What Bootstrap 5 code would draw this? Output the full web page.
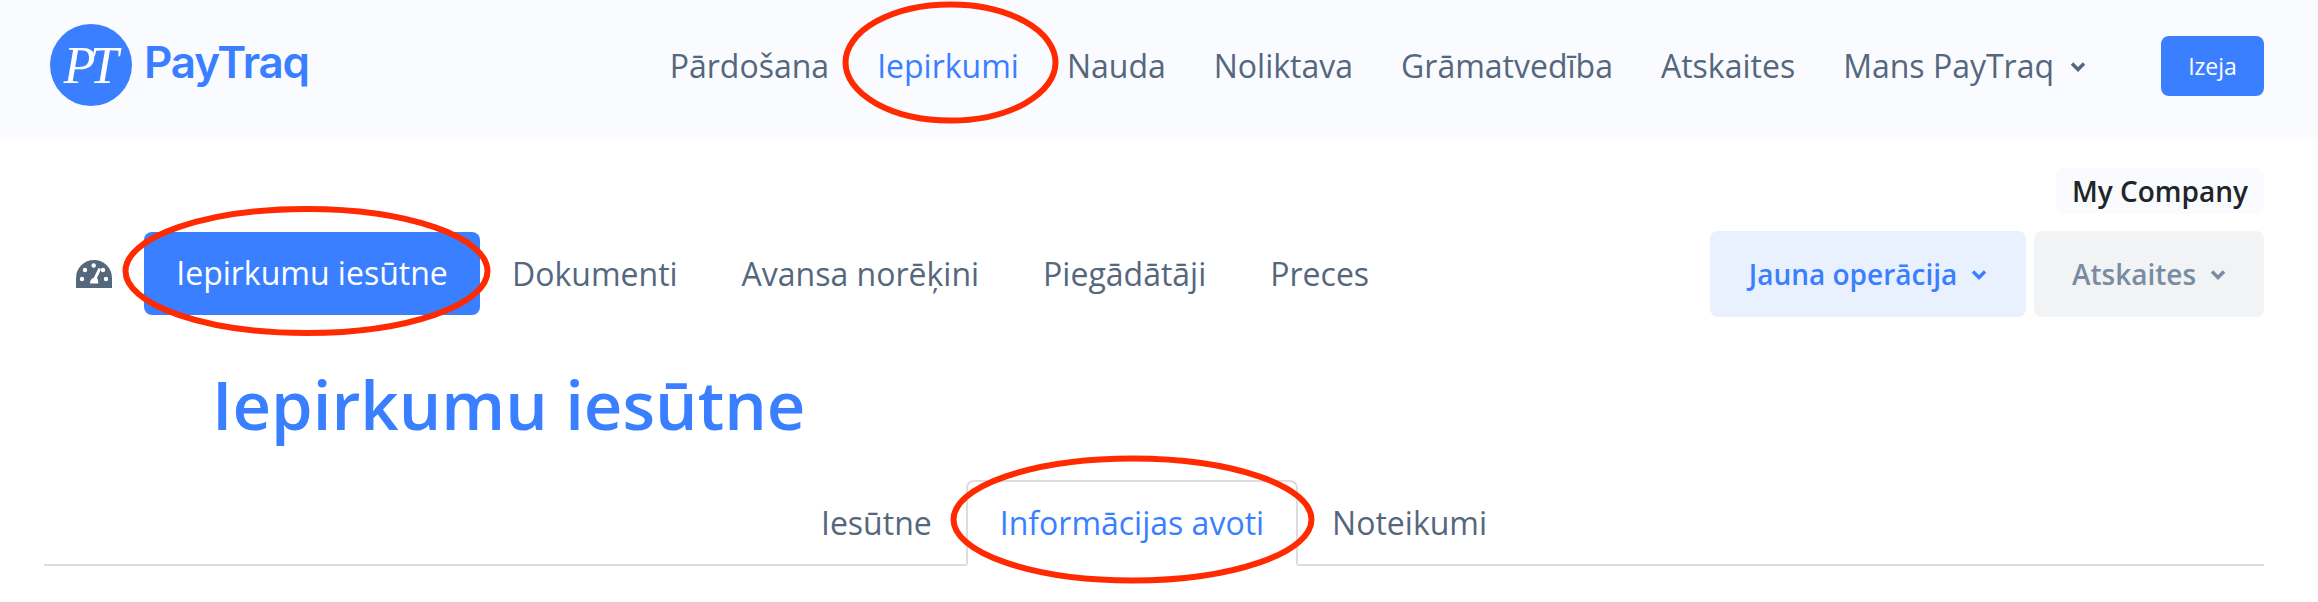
<!DOCTYPE html>
<html lang="lv">
<head>
<meta charset="utf-8">
<title>PayTraq</title>
<link href="https://cdn.jsdelivr.net/npm/bootstrap@5.3.0/dist/css/bootstrap.min.css" rel="stylesheet">
<style>
body{font-family:"Open Sans","Noto Sans",sans-serif;background:#fff;color:#55677d;position:relative;height:602px;overflow:hidden}
.pt-header{background:#f9fbff;height:139px;padding:0 54px 0 50px}
.pt-logo{gap:12px;color:#3a7fff;text-decoration:none;margin-top:-9px}
.pt-disc{width:82px;height:82px;border-radius:50%;background:#3a7fff;color:#fff;font:italic 400 52px "Liberation Serif",serif;letter-spacing:-6px;padding-right:6px}
.pt-word{font:600 44px/1 Inter,sans-serif;letter-spacing:-1.2px;margin-top:-7px}
.pt-top{gap:48px;font-size:32px;margin-top:-7px}
.pt-top a{color:#55677d;text-decoration:none}
.pt-top a.pt-on{color:#3a7fff}
.pt-chev{width:16px;height:11px;flex:none}
.pt-exit{background:#3a7fff;border:0;color:#fff;width:103px;height:60px;border-radius:8px;font-size:23px;margin-left:75px;padding:0;margin-top:-7px}
.pt-body{padding:0 54px 0 44px}
.pt-company{margin-top:29px;height:46px;width:208px;background:#f9fbff;color:#212529;font-weight:600;font-size:28px;border-radius:8px}
.pt-sub{margin-top:17px;height:86px}
.pt-gauge{width:36px;height:28px;margin-left:32px;margin-right:32px;flex:none}
.pt-pill{background:#3a7fff;color:#fff;height:83px;width:336px;border-radius:8px;font-size:32px;margin-right:32px;margin-bottom:2px;text-decoration:none}
.pt-subitems{gap:64px;font-size:32px}
.pt-subitems a{color:#55677d;text-decoration:none}
.pt-act{height:86px;border-radius:8px;font-size:28px;font-weight:600;border:0;gap:14px;padding:0}
.pt-act-a{background:#e9f1fe;color:#3a7fff;width:316px}
.pt-act-b{background:#f1f3f5;color:#7a8ca3;width:230px;margin-left:8px}
.pt-title{color:#3a7fff;font-size:67px;font-weight:600;line-height:90px;margin:0 0 0 168px;padding-top:42px}
.pt-tabs{height:86px;margin-top:31px;border-bottom:2px solid #dcdddf}
.pt-tab{font-size:32px;color:#55677d;height:86px;padding:0 32px;margin-bottom:-2px;border:2px solid transparent;border-radius:8px 8px 0 0;text-decoration:none}
.pt-tab.pt-live{color:#3a7fff;border-color:#dcdddf #dcdddf #fff;background:#fff}
.pt-mark{position:absolute;pointer-events:none;overflow:visible}
.pt-mark ellipse{fill:none;stroke:#ff2a00;stroke-width:6}
</style>
</head>
<body>
<header class="pt-header d-flex align-items-center">
  <a href="#" class="pt-logo d-flex align-items-center">
    <span class="pt-disc d-flex align-items-center justify-content-center">PT</span>
    <span class="pt-word">PayTraq</span>
  </a>
  <nav class="pt-top d-flex align-items-center ms-auto">
    <a href="#">Pārdošana</a>
    <a href="#" class="pt-on">Iepirkumi</a>
    <a href="#">Nauda</a>
    <a href="#">Noliktava</a>
    <a href="#">Grāmatvedība</a>
    <a href="#">Atskaites</a>
    <a href="#" class="d-flex align-items-center gap-3">Mans PayTraq
      <svg class="pt-chev" viewBox="0 0 16 11"><path d="M2 2.500l6 6 6-6" fill="none" stroke="#55677d" stroke-width="3.400"/></svg></a>
  </nav>
  <button class="btn pt-exit" type="button">Izeja</button>
</header>
<main class="pt-body">
  <div class="d-flex justify-content-end">
    <div class="pt-company d-flex align-items-center justify-content-center">My Company</div>
  </div>
  <div class="pt-sub d-flex align-items-center">
    <svg class="pt-gauge" viewBox="0 0 36 28">
      <path d="M0 28V18a18 18 0 0 1 36 0v10z" fill="#55677d"/>
      <circle cx="6" cy="19" r="2.200" fill="#fff"/><circle cx="30" cy="19" r="2.200" fill="#fff"/>
      <circle cx="9" cy="10" r="2.200" fill="#fff"/><circle cx="27" cy="10" r="2.200" fill="#fff"/>
      <circle cx="17.700" cy="5.500" r="2.200" fill="#fff"/>
      <path d="M22.500 8l2.600 1L21 18q1.800 1.800 1.200 5.500H14q0-4.500 3.800-5.800z" fill="#fff"/>
    </svg>
    <a href="#" class="pt-pill d-flex align-items-center justify-content-center">Iepirkumu iesūtne</a>
    <div class="pt-subitems d-flex align-items-center">
      <a href="#">Dokumenti</a>
      <a href="#">Avansa norēķini</a>
      <a href="#">Piegādātāji</a>
      <a href="#">Preces</a>
    </div>
    <button class="btn pt-act pt-act-a ms-auto d-flex align-items-center justify-content-center" type="button">Jauna operācija
      <svg class="pt-chev" viewBox="0 0 16 11"><path d="M2 2.500l6 6 6-6" fill="none" stroke="#3a7fff" stroke-width="3.400"/></svg></button>
    <button class="btn pt-act pt-act-b d-flex align-items-center justify-content-center" type="button">Atskaites
      <svg class="pt-chev" viewBox="0 0 16 11"><path d="M2 2.500l6 6 6-6" fill="none" stroke="#7a8ca3" stroke-width="3.400"/></svg></button>
  </div>
  <h1 class="pt-title">Iepirkumu iesūtne</h1>
  <div class="pt-tabs d-flex justify-content-center">
    <a href="#" class="pt-tab d-flex align-items-center">Iesūtne</a>
    <a href="#" class="pt-tab pt-live d-flex align-items-center">Informācijas avoti</a>
    <a href="#" class="pt-tab d-flex align-items-center">Noteikumi</a>
  </div>
</main>
<svg class="pt-mark top-0 start-0" width="2318" height="602">
  <ellipse cx="950.500" cy="62.500" rx="105" ry="58"/>
  <ellipse cx="306.500" cy="271" rx="181" ry="62"/>
  <ellipse cx="1132.500" cy="519.500" rx="179" ry="61"/>
</svg>
<script src="https://cdn.jsdelivr.net/npm/bootstrap@5.3.0/dist/js/bootstrap.bundle.min.js"></script>
</body>
</html>
